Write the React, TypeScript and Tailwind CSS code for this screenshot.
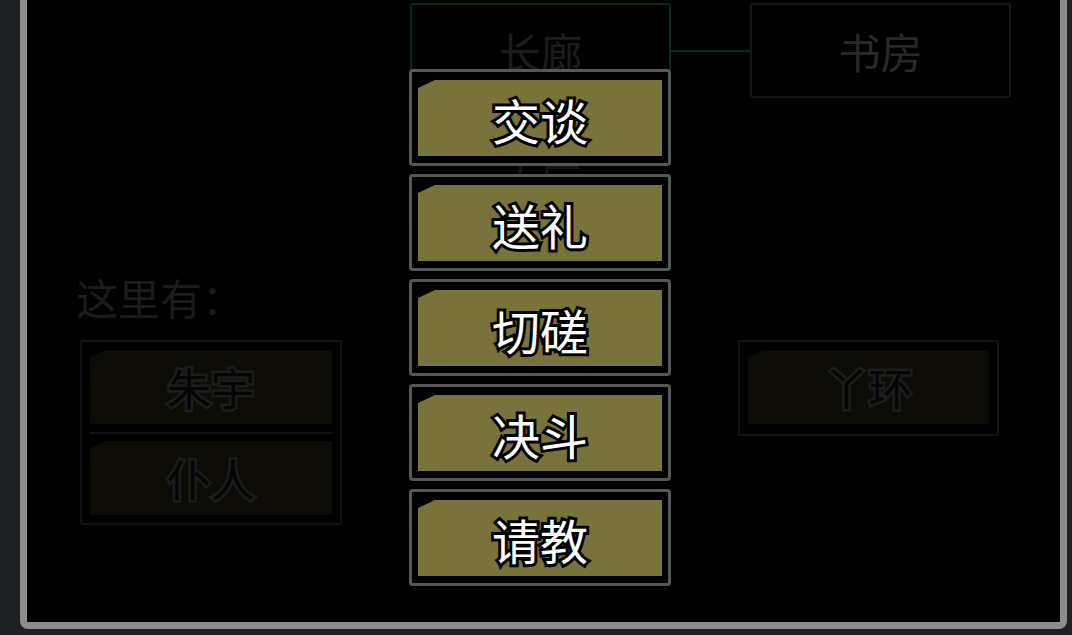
import React from "react";

const menu = ["交谈", "送礼", "切磋", "决斗", "请教"];

const font = "font-['Noto_Sans_CJK_SC','Noto_Sans',sans-serif]";

function DimItem({ label }: { label: string }) {
  return (
    <div className="flex h-[74px] items-center justify-center bg-[#0c0b06] [clip-path:polygon(15px_0,100%_0,100%_100%,0_100%,0_7px)]">
      <span className="text-[44px] leading-none text-[#050505] [-webkit-text-stroke:5px_#1c1c1c] [paint-order:stroke_fill]">
        {label}
      </span>
    </div>
  );
}

export default function App() {
  return (
    <div className={`relative h-[635px] w-[1072px] overflow-hidden bg-[#1f2023] ${font}`}>
      {/* frame */}
      <div className="ml-[20px] flex h-[629px] w-[1047px] flex-col rounded-b-[8px] border-x-[7px] border-b-[7px] border-[#8d8d8d] bg-black">
        {/* top nodes */}
        <div className="mt-[3px] ml-[383px] flex items-center">
          <div className="flex h-[95px] w-[261px] items-center justify-center rounded-[3px] border-2 border-[#0d2626]">
            <span className="text-[42px] leading-none text-[#1c1c1c]">长廊</span>
          </div>
          <div className="h-[2px] w-[79px] bg-[#0c2626]" />
          <div className="flex h-[95px] w-[261px] items-center justify-center rounded-[3px] border-2 border-[#151515]">
            <span className="text-[42px] leading-none text-[#282828]">书房</span>
          </div>
        </div>
        <div className="ml-[383px] mt-[62px] w-[261px] text-center text-[40px] leading-none text-[#161616]">大厅</div>
        <div className="ml-[49px] mt-[76px] text-[42px] leading-none text-[#1b1b1b]">这里有：</div>
        <div className="mt-[22px] flex items-start">
          <div className="ml-[53px] flex w-[262px] flex-col rounded-[3px] border-2 border-[#121212] p-[8px]">
            <DimItem label="朱宇" />
            <div className="flex h-[17px] items-center">
              <div className="h-[2px] w-full bg-[#121212]" />
            </div>
            <DimItem label="仆人" />
          </div>
          <div className="ml-[396px] h-[96px] w-[261px] rounded-[3px] border-2 border-[#121212] px-[8px] pt-[8px]">
            <DimItem label="丫环" />
          </div>
        </div>
      </div>

      {/* popup menu */}
      <div className="absolute left-[409px] top-[69px] flex flex-col gap-[8px]">
        {menu.map((m) => (
          <div
            key={m}
            className="h-[97px] w-[262px] rounded-[4px] border-[3px] border-[#575757] bg-black px-[6px] pt-[8px] pb-[7px]"
          >
            <div className="flex h-full items-center justify-center bg-[#77733b] [clip-path:polygon(17px_0,100%_0,100%_100%,0_100%,0_8px)]">
              <span className="mt-[2px] text-[48px] leading-none text-white [-webkit-text-stroke:6px_#000] [paint-order:stroke_fill]">
                {m}
              </span>
            </div>
          </div>
        ))}
      </div>
    </div>
  );
}
